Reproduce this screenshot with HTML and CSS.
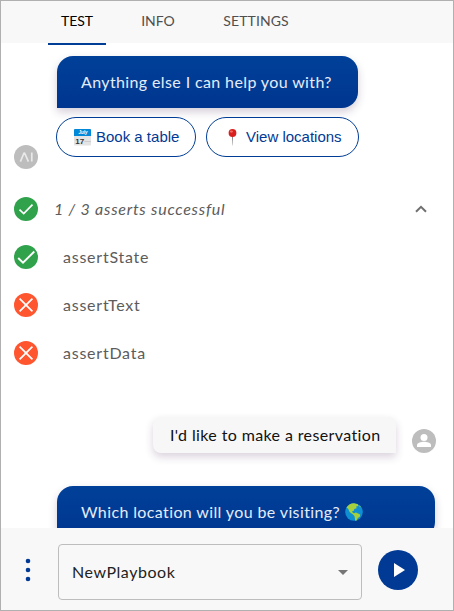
FILE: index.html
```html
<!DOCTYPE html>
<html lang="en">
<head>
<meta charset="utf-8">
<title>Playbook</title>
<link rel="stylesheet" href="styles.css">
</head>
<body>
<div class="panel">
  <nav class="tabs">
    <span class="tab tab-test active">TEST</span>
    <span class="tab tab-info">INFO</span>
    <span class="tab tab-settings">SETTINGS</span>
  </nav>
  <main class="chat">
    <div class="bot-row">
      <svg class="avatar" viewBox="0 0 24 24"><circle cx="12" cy="12" r="12" fill="#bdbdbd"/><path d="M6.4 16.6 10 8H10.6L14.4 16.6M17.8 7.4V16.6" fill="none" stroke="#e9e9e9" stroke-width="1.7" stroke-linejoin="round"/></svg>
      <div class="bot-content">
        <div class="bubble"><span class="msg">Anything else I can help you with?</span></div>
        <div class="chips">
          <button class="chip chip-book">
            <svg class="emoji" viewBox="0 0 17 17"><rect width="17" height="16.5" rx="1" fill="#e4e4e4"/><path d="M0 1Q0 0 1 0H16Q17 0 17 1V7H0Z" fill="#0288d8"/><text x="4.5" y="5" class="cal-month">July</text><text x="1.3" y="15" class="cal-day">17</text><path d="M10.5 12.5H17" stroke="#c3c3c3" stroke-width=".7"/></svg>
            <span>Book a table</span>
          </button>
          <button class="chip chip-view">
            <svg class="emoji" viewBox="0 0 17 17"><path d="M7.9 7H9.1L8.7 16.5H8.4Z" fill="#8c8c8c"/><circle cx="8.5" cy="4" r="3.9" fill="#d9201f"/><ellipse cx="7.4" cy="2.6" rx="1.6" ry="1.1" fill="#f36a61"/></svg>
            <span>View locations</span>
          </button>
        </div>
      </div>
    </div>

    <section class="asserts">
      <div class="assert summary">
        <svg class="status" viewBox="0 0 24 24"><circle cx="12" cy="12" r="12" fill="#31a24c"/><path d="M5.5 12.6 9.7 16.5 18.5 7.7" fill="none" stroke="#fff" stroke-width="1.7"/></svg>
        <span class="label">1 / 3 asserts successful</span>
        <svg class="chevron" viewBox="0 0 12 8"><path d="M1 6.8 6 1.8 11 6.8" fill="none" stroke="#707070" stroke-width="2"/></svg>
      </div>
      <div class="assert">
        <svg class="status" viewBox="0 0 24 24"><circle cx="12" cy="12" r="12" fill="#31a24c"/><path d="M4.2 13 9 17.7 20.3 6.5" fill="none" stroke="#fff" stroke-width="1.9"/></svg>
        <span class="label">assertState</span>
      </div>
      <div class="assert">
        <svg class="status" viewBox="0 0 24 24"><circle cx="12" cy="12" r="12" fill="#ff5630"/><path d="M5.6 5.6 18.4 18.4M18.4 5.6 5.6 18.4" stroke="#fff" stroke-width="1.7"/></svg>
        <span class="label">assertText</span>
      </div>
      <div class="assert">
        <svg class="status" viewBox="0 0 24 24"><circle cx="12" cy="12" r="12" fill="#ff5630"/><path d="M5.6 5.6 18.4 18.4M18.4 5.6 5.6 18.4" stroke="#fff" stroke-width="1.7"/></svg>
        <span class="label">assertData</span>
      </div>
    </section>

    <div class="user-row">
      <div class="user-bubble"><span class="msg">I'd like to make a reservation</span></div>
      <svg class="avatar" viewBox="0 0 24 24"><circle cx="12" cy="12" r="12" fill="#bdbdbd"/><circle cx="12" cy="8.5" r="3.5" fill="#fff"/><path d="M5 18V16.2C5 13.8 9.5 12.8 12 12.8S19 13.8 19 16.2V18Z" fill="#fff"/></svg>
    </div>

    <div class="bubble next-bubble">
      <span class="msg">Which location will you be visiting?</span>
      <svg class="globe" viewBox="0 0 18 18"><circle cx="9" cy="9" r="8.8" fill="#0e8fd3"/><path d="M1.5 4.5Q4.5 0 9 .2L12.8 1.2 13.5 3 11.2 3.6 11.6 5.2 9.4 6 8.6 8 7 8.2 7.6 9.6 9 10.2 11 9.6 15.2 11.6 14.8 13.8 12.8 15 11.6 17.4 10.2 17.8 9.5 13.2 8 11.4 4.8 9.2 3.2 5.8Z" fill="#a5cf3d"/><path d="M14 2.3 16.2 4.2 14.8 4Z" fill="#a5cf3d"/></svg>
    </div>
  </main>

  <footer class="controls">
    <svg class="more" viewBox="0 0 6 24"><g fill="#003a94"><circle cx="3" cy="3" r="2.3"/><circle cx="3" cy="12" r="2.3"/><circle cx="3" cy="21" r="2.3"/></g></svg>
    <div class="select"><span>NewPlaybook</span><svg class="caret" viewBox="0 0 10 5"><path d="M0 0H10L5 5Z" fill="#757575"/></svg></div>
    <button class="play"><svg viewBox="0 0 11 14"><path d="M0 0 11 7 0 14Z" fill="#fff"/></svg></button>
  </footer>
</div>
</body>
</html>
```
FILE: styles.css
```css
* { box-sizing: border-box; }
body { margin: 0; }
svg { display: block; flex: none; }
button { font: inherit; padding: 0; margin: 0; }
.panel {
  width: 454px;
  height: 611px;
  border: 1px solid #b0b0b0;
  background: #fff;
  display: flex;
  flex-direction: column;
  overflow: hidden;
  font-family: Lato, "Open Sans", sans-serif;
  font-size: 16px;
  line-height: 20px;
  white-space: nowrap;
}
.tabs {
  flex: none;
  height: 42px;
  padding-left: 47px;
  display: flex;
  gap: 18px;
  background: #f8f8f8;
  font-size: 14px;
  color: #4f4f4f;
}
.tab { height: 44px; padding-top: 10px; text-align: center; }
.tab-test { width: 58px; }
.tab-info { width: 68px; }
.tab-settings { width: 92px; letter-spacing: .1px; }
.active { color: #000; border-bottom: 2px solid #003d96; }
.chat {
  flex: 1;
  min-height: 0;
  overflow: hidden;
  padding-top: 13px;
}
.bot-row { display: flex; align-items: flex-end; height: 113px; padding-left: 13px; }
.avatar { width: 24px; height: 24px; }
.bot-content { height: 113px; margin-left: 18px; }
.bubble {
  display: flex;
  align-items: center;
  width: 301px;
  height: 52px;
  margin-left: 1px;
  padding-left: 24px;
  border-radius: 16px 16px 16px 0;
  background: linear-gradient(#004099, #00368f);
  box-shadow: 0 4px 8px rgba(70, 30, 80, .22);
  color: #e4ecf8;
}
.msg { letter-spacing: .38px; }
.chips { display: flex; gap: 10px; margin-top: 9px; }
.chip {
  display: flex;
  align-items: center;
  height: 40px;
  padding-left: 17px;
  border: 1px solid #003d96;
  border-radius: 20px;
  background: #fff;
  color: #003a94;
  font: 15px/20px "Liberation Sans", Arial, sans-serif;
}
.chip-book { width: 140px; gap: 5px; }
.chip-view { width: 153px; gap: 5px; }
.emoji { width: 17px; height: 17px; }
.cal-month { font: italic bold 4.5px "Liberation Sans", sans-serif; fill: #fff; }
.cal-day { font: bold 8px "Liberation Sans", sans-serif; fill: #333; }
.asserts { margin-top: 16px; }
.assert { display: flex; align-items: center; height: 48px; padding: 0 26px 0 13px; color: #5c5c5c; }
.status { width: 24px; height: 24px; }
.label { margin-left: 25px; letter-spacing: .76px; }
.summary .label { margin-left: 16px; font-style: italic; }
.chevron { width: 12px; height: 8px; margin-left: auto; }
.user-row { display: flex; justify-content: flex-end; align-items: flex-end; gap: 16px; margin-top: 40px; padding-right: 17px; }
.user-bubble {
  width: 243px;
  height: 36px;
  padding: 8px 0 0 17px;
  border-radius: 8px 8px 0 8px;
  background: #f7f7f7;
  box-shadow: 0 4px 8px rgba(70, 30, 80, .2);
  color: #111;
}
.next-bubble { width: 378px; margin: 33px 0 0 56px; }
.globe { width: 18px; height: 18px; margin-left: 5px; }
.controls {
  flex: none;
  height: 82px;
  display: flex;
  align-items: center;
  padding: 2px 0 0 24px;
  background: #f8f8f8;
}
.more { width: 6px; height: 24px; }
.select {
  width: 304px;
  height: 56px;
  margin: 4px 0 0 27px;
  padding: 0 13px;
  border: 1px solid #bdbdbd;
  border-radius: 4px;
  display: flex;
  align-items: center;
  justify-content: space-between;
  color: #222;
  letter-spacing: .55px;
}
.caret { width: 10px; height: 5px; }
.play {
  width: 40px;
  height: 40px;
  margin-left: 16px;
  padding-left: 2px;
  border: 0;
  border-radius: 50%;
  background: #003a94;
  display: flex;
  align-items: center;
  justify-content: center;
}
.play svg { width: 11px; height: 14px; }
```
